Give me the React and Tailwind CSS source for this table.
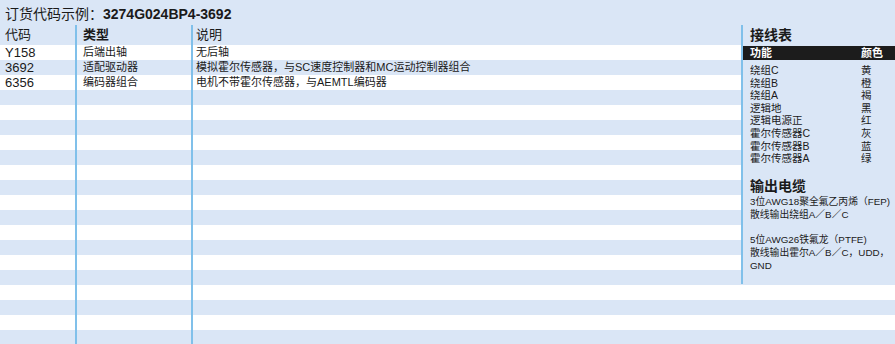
import React from "react";

const rows = [
  { code: "Y158", type: "后端出轴", desc: "无后轴" },
  { code: "3692", type: "适配驱动器", desc: "模拟霍尔传感器，与SC速度控制器和MC运动控制器组合" },
  { code: "6356", type: "编码器组合", desc: "电机不带霍尔传感器，与AEMTL编码器" },
];

// filler rows so the stripes run to the bottom
const allRows = [...rows, ...Array.from({ length: 17 }, () => ({ code: "", type: "", desc: "" }))];

const wiring = [
  ["绕组C", "黄"],
  ["绕组B", "橙"],
  ["绕组A", "褐"],
  ["逻辑地", "黑"],
  ["逻辑电源正", "红"],
  ["霍尔传感器C", "灰"],
  ["霍尔传感器B", "蓝"],
  ["霍尔传感器A", "绿"],
];

const App = () => {
  return (
    <div className="relative w-[895px] h-[344px] overflow-hidden bg-white text-[#1a1a1a] font-['Liberation_Sans','Noto_Sans_CJK_SC',sans-serif]">
      {/* Title */}
      <div className="h-[25px] bg-[#dae6f6] pl-[5px] text-[14px] leading-[28px] whitespace-nowrap">
        订货代码示例：<span className="font-bold">3274G024BP4-3692</span>
      </div>

      {/* Column headers */}
      <div className="grid grid-cols-[75px_116px_1fr] h-[20px] bg-[#dae6f6] text-[13px] leading-[20px]">
        <div className="pl-[5px]">代码</div>
        <div className="border-l-2 border-[#80c0ea] pl-[6px] font-bold">类型</div>
        <div className="border-l-2 border-[#80c0ea] pl-[3px]">说明</div>
      </div>

      {/* Striped rows */}
      {allRows.map((r, i) => (
        <div
          key={i}
          className={`grid grid-cols-[75px_116px_1fr] h-[15px] leading-[15px] ${i % 2 === 1 ? "bg-[#dae6f6]" : "bg-white"}`}
        >
          <div className="pl-[5px] text-[13px]">{r.code}</div>
          <div className="border-l-2 border-[#80c0ea] pl-[6px] text-[11px] whitespace-nowrap">{r.type}</div>
          <div className="border-l-2 border-[#80c0ea] pl-[3px] text-[11px] whitespace-nowrap">{r.desc}</div>
        </div>
      ))}

      {/* Wiring panel */}
      <div className="absolute left-[741px] top-[25px] w-[154px] h-[259px] bg-[#dae6f6] border-l-2 border-[#80c0ea]">
        <div className="pl-[7px] h-[21px] text-[14px] font-bold leading-[20px]">接线表</div>
        <div className="grid grid-cols-[111px_1fr] h-[14px] bg-[#1c1c1c] text-white text-[11px] font-bold leading-[14px] pl-[7px]">
          <span>功能</span>
          <span>颜色</span>
        </div>
        <div className="mt-[4px] pl-[7px] text-[10.5px] leading-[12.6px]">
          {wiring.map(([f, c]) => (
            <div key={f} className="grid grid-cols-[111px_1fr]">
              <span>{f}</span>
              <span>{c}</span>
            </div>
          ))}
        </div>
        <div className="mt-[11px] pl-[7px] h-[20px] text-[14px] font-bold leading-[20px]">输出电缆</div>
        <div className="pl-[7px] text-[9.8px] leading-[12.8px] whitespace-nowrap">
          <div>3位AWG18聚全氟乙丙烯（FEP)</div>
          <div>散线输出绕组A／B／C</div>
          <div className="h-[12.8px]"></div>
          <div>5位AWG26铁氟龙（PTFE)</div>
          <div>散线输出霍尔A／B／C，UDD，</div>
          <div>GND</div>
        </div>
      </div>
    </div>
  );
};

export default App;
